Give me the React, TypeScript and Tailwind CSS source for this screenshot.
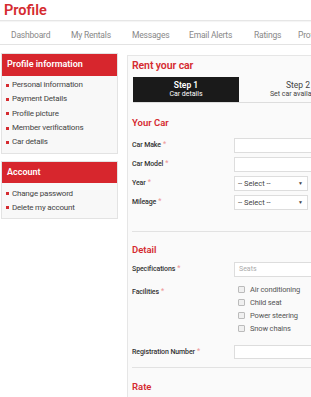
import React from "react";

const red = "text-[#d52b30]";

function SideItem({ children }: { children: React.ReactNode }) {
  return (
    <li className="flex items-center h-[14.3px] text-[8px] tracking-[-0.2px] text-[#444]">
      <span className="w-[3px] h-[3px] bg-[#d52b30] mr-[3px] ml-[4px]" />
      {children}
    </li>
  );
}

function Label({ text, req = true, h }: { text: string; req?: boolean; h?: string }) {
  return (
    <div className={`w-[102px] text-[7px] tracking-[-0.1px] text-[#333] font-medium flex items-center ${h ?? ""}`}>
      {text}
      {req && <span className="text-[#e99] ml-[2px] text-[7px] leading-none -mt-[2px]">*</span>}
    </div>
  );
}

function Select() {
  return (
    <div className="w-[74px] h-[15px] bg-white border border-[#ddd] flex items-center justify-between px-[3px] text-[7.5px] text-[#444]">
      <span>-- Select --</span>
      <span className="text-[5px] mr-[1px]">▼</span>
    </div>
  );
}

function Check({ label }: { label: string }) {
  return (
    <div className="flex items-center h-[13px] text-[7.5px] tracking-[-0.15px] text-[#555]">
      <span className="w-[7px] h-[7px] border border-[#bbb] bg-[#f0f0f0] rounded-[1px] mr-[5px]" />
      {label}
    </div>
  );
}

export default function App() {
  return (
    <div
      className="w-[311px] h-[397px] overflow-hidden bg-white relative"
      style={{ fontFamily: "Roboto, 'Noto Sans', sans-serif" }}
    >
      <div className="w-[420px]">
        <div className="h-[21px] border-b border-[#e6e6e6] shadow-[0_1px_1px_rgba(0,0,0,0.04)] pl-[4px] flex items-center">
          <h1 className={`text-[14.5px] font-semibold ${red} leading-none mt-[3px]`}>Profile</h1>
        </div>
        <nav className="h-[24px] border-b border-[#e3e3e3] flex items-center text-[8.5px] tracking-[-0.2px] text-[#888] pl-[11px] pt-[5px]">
          <span className="w-[60px]">Dashboard</span>
          <span className="w-[61px]">My Rentals</span>
          <span className="w-[57px]">Messages</span>
          <span className="w-[65px]">Email Alerts</span>
          <span className="w-[44px]">Ratings</span>
          <span>Profile</span>
        </nav>
        <div className="flex pt-[8px]">
          <aside className="w-[117px] ml-[1px] flex flex-col gap-[7px]">
            <div className="border border-[#e3e3e3] bg-[#f8f8f8]">
              <div className="h-[22px] bg-[#d7262d] text-white text-[9px] font-semibold flex items-center pl-[5px]">
                Profile information
              </div>
              <ul className="pt-[2px] pb-[4px]">
                <SideItem>Personal information</SideItem>
                <SideItem>Payment Details</SideItem>
                <SideItem>Profile picture</SideItem>
                <SideItem>Member verifications</SideItem>
                <SideItem>Car details</SideItem>
              </ul>
            </div>
            <div className="border border-[#e3e3e3] bg-[#f8f8f8]">
              <div className="h-[21px] bg-[#d7262d] text-white text-[9px] font-semibold flex items-center pl-[5px]">
                Account
              </div>
              <ul className="pt-[3px] pb-[3px]">
                <SideItem>Change password</SideItem>
                <SideItem>Delete my account</SideItem>
              </ul>
            </div>
          </aside>
          <main className="ml-[9px] mt-[2px] w-[260px] border border-[#e6e6e6] bg-[#fafafa] pl-[4px]">
            <h2 className={`${red} text-[10.5px] tracking-[-0.1px] font-semibold mt-[2px] h-[16px] leading-[16px]`}>Rent your car</h2>
            <div className="flex mt-[3px] ml-[1px] border-b border-[#ddd]">
              <div className="w-[106px] h-[25px] bg-[#1a1a1a] text-white flex flex-col items-center justify-center leading-[9px]">
                <span className="text-[8.5px] font-semibold">Step 1</span>
                <span className="text-[7px]">Car details</span>
              </div>
              <div className="w-[118px] h-[25px] text-[#444] flex flex-col items-center justify-center leading-[9px]">
                <span className="text-[8.5px]">Step 2</span>
                <span className="text-[7px]">Set car availability</span>
              </div>
            </div>
            <h3 className={`${red} text-[9.5px] font-semibold mt-[13px] h-[14px] leading-[14px]`}>Your Car</h3>
            <div className="mt-[8px] flex flex-col gap-[4px]">
              <div className="flex items-center">
                <Label text="Car Make" h="h-[15px]" />
                <div className="w-[120px] h-[15px] bg-white border border-[#ddd]" />
              </div>
              <div className="flex items-center">
                <Label text="Car Model" h="h-[15px]" />
                <div className="w-[120px] h-[15px] bg-white border border-[#ddd]" />
              </div>
              <div className="flex items-center">
                <Label text="Year" h="h-[15px]" />
                <Select />
              </div>
              <div className="flex items-center">
                <Label text="Mileage" h="h-[15px]" />
                <Select />
              </div>
            </div>
            <div className="border-b border-[#e2e2e2] mt-[21px]" />
            <h3 className={`${red} text-[9.5px] font-semibold mt-[11px] h-[14px] leading-[14px]`}>Detail</h3>
            <div className="mt-[5px] flex items-center">
              <Label text="Specifications" h="h-[15px]" />
              <div className="w-[120px] h-[15px] bg-white border border-[#ddd] text-[7px] text-[#aaa] flex items-center pl-[4px]">
                Seats
              </div>
            </div>
            <div className="mt-[6px] flex">
              <Label text="Facilities" h="h-[13px] mt-[3px]" />
              <div className="pl-[4px]">
                <Check label="Air conditioning" />
                <Check label="Child seat" />
                <Check label="Power steering" />
                <Check label="Snow chains" />
              </div>
            </div>
            <div className="mt-[10px] flex items-center">
              <Label text="Registration Number" h="h-[14px]" />
              <div className="w-[120px] h-[14px] bg-white border border-[#ddd]" />
            </div>
            <div className="border-b border-[#e2e2e2] mt-[8px]" />
            <h3 className={`${red} text-[9.5px] font-semibold mt-[12px] h-[14px] leading-[14px]`}>Rate</h3>
            <div className="h-[20px]" />
          </main>
        </div>
      </div>
    </div>
  );
}
